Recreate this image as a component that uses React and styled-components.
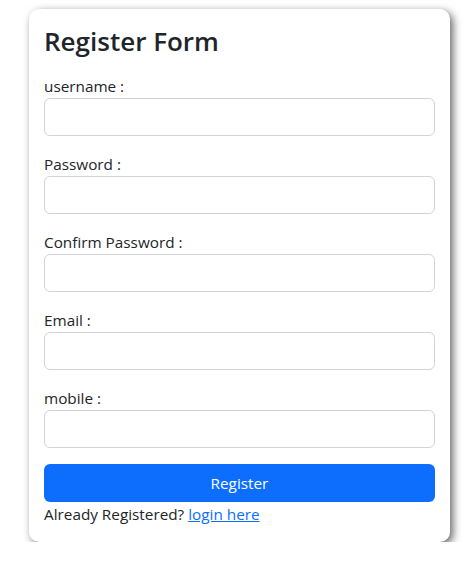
import React from "react";
import styled, { createGlobalStyle } from "styled-components";

const Global = createGlobalStyle`
  body {
    margin: 0;
    background: #fff;
    font-family: "Open Sans", "Noto Sans", sans-serif;
    color: #212529;
  }
  * { box-sizing: border-box; }
`;

const Page = styled.div`
  padding: 9px 21px 0 29px;
`;

const Card = styled.form`
  width: 421px;
  background: #fff;
  border-radius: 10px;
  box-shadow: 3px 3px 8px rgba(0, 0, 0, 0.6);
  padding: 16px 15px 16px 15px;
  display: flex;
  flex-direction: column;
`;

const Title = styled.h2`
  margin: 1px 0 17px;
  font-size: 26px;
  font-weight: 600;
  line-height: 1.2;
  color: #212529;
`;

const Group = styled.div`
  margin-bottom: 16px;
  display: flex;
  flex-direction: column;
`;

const Label = styled.label`
  font-size: 15.3px;
  line-height: 24px;
`;

const Input = styled.input`
  height: 38px;
  width: 100%;
  border: 1px solid #ced4da;
  border-radius: 6px;
  padding: 6px 12px;
  font: inherit;
`;

const Button = styled.button`
  height: 38px;
  width: 100%;
  border: none;
  border-radius: 6px;
  background: #0d6efd;
  color: #fff;
  font-family: inherit;
  font-size: 15.3px;
`;

const Footer = styled.p`
  margin: 0;
  font-size: 15.3px;
  line-height: 24px;
`;

const Link = styled.a`
  color: #0d6efd;
  text-decoration: underline;
`;

const fields = ["username :", "Password :", "Confirm Password :", "Email :", "mobile :"];

export default function App() {
  return (
    <>
      <Global />
      <Page>
        <Card onSubmit={(e) => e.preventDefault()}>
          <Title>Register Form</Title>
          {fields.map((f) => (
            <Group key={f}>
              <Label>{f}</Label>
              <Input />
            </Group>
          ))}
          <Button type="submit">Register</Button>
          <Footer>
            Already Registered? <Link href="#">login here</Link>
          </Footer>
        </Card>
      </Page>
    </>
  );
}
